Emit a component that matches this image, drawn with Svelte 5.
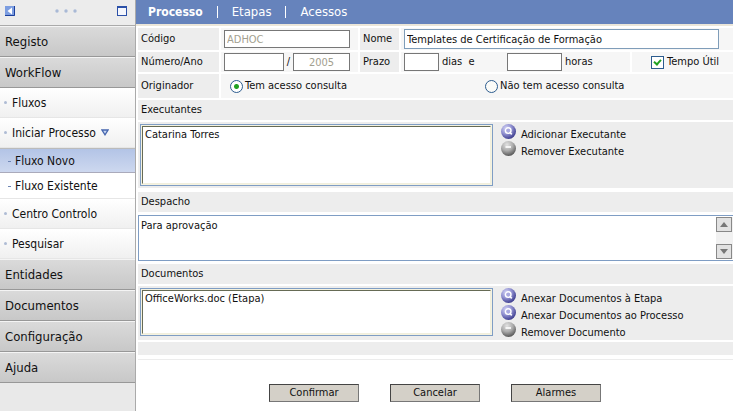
<script>
  const before = ['Registo', 'WorkFlow'];
  const after = ['Entidades', 'Documentos', 'Configuração', 'Ajuda'];
  let code = $state('ADHOC');
  let name = $state('Templates de Certificação de Formação');
  let year = $state('2005');
  let dispatch = $state('Para aprovação');
  let access = $state('com');
  let useful = $state(true);
</script>

{#snippet search()}
  <svg width="16" height="16" viewBox="0 0 16 16" aria-hidden="true">
    <defs>
      <radialGradient id="blueBall" cx="0.35" cy="0.3" r="0.75">
        <stop offset="0" stop-color="#d4d4f6" />
        <stop offset="0.5" stop-color="#9090d0" />
        <stop offset="1" stop-color="#38388a" />
      </radialGradient>
    </defs>
    <circle cx="7.5" cy="7.5" r="7.5" fill="url(#blueBall)" />
    <circle cx="7.2" cy="6.6" r="2.8" fill="#a9a9e0" stroke="#fff" stroke-width="1.4" />
    <path d="M9.2 8.7l1.6 1.7" stroke="#fff" stroke-width="1.6" />
  </svg>
{/snippet}

{#snippet minus()}
  <svg width="16" height="16" viewBox="0 0 16 16" aria-hidden="true">
    <defs>
      <radialGradient id="greyBall" cx="0.4" cy="0.25" r="0.8">
        <stop offset="0" stop-color="#e2e2e2" />
        <stop offset="0.5" stop-color="#ababab" />
        <stop offset="1" stop-color="#4c4c4c" />
      </radialGradient>
    </defs>
    <circle cx="7.5" cy="7.5" r="7.5" fill="url(#greyBall)" />
    <path d="M4.5 6h5.5" stroke="#fff" stroke-width="1.6" />
  </svg>
{/snippet}

<div class="app">
  <nav class="side">
    <div class="tools">
      <button class="plain" aria-label="Recolher">
        <svg width="10" height="10" viewBox="0 0 10 10"><rect width="10" height="10" fill="#7c9de0" /><path d="M0 9.5h9.5V0" fill="none" stroke="#1b3f9c" /><path d="M7 1.5v7L2.5 5z" fill="#fff" /></svg>
      </button>
      <svg width="22" height="4" viewBox="0 0 22 4" fill="#a9b9d6" aria-hidden="true"><circle cx="2" cy="2" r="1.7" /><circle cx="11" cy="2" r="1.7" /><circle cx="20" cy="2" r="1.7" /></svg>
      <button class="plain" aria-label="Janela">
        <svg width="10" height="10" viewBox="0 0 10 10"><rect x="0.5" y="0.5" width="9" height="9" fill="#f4f6fc" stroke="#2b50a8" /><path d="M0 1h10" stroke="#2b50a8" stroke-width="2" /></svg>
      </button>
    </div>
    {#each before as item}<a class="head" href="#top">{item}</a>{/each}
    <a class="item" href="#top"><i></i>Fluxos</a>
    <a class="item" href="#top"><i></i>Iniciar Processo
      <svg class="down" width="8" height="7" viewBox="0 0 8 7" aria-hidden="true"><path d="M1 1h6L4 5.8z" fill="#c9d8f2" stroke="#4666ae" stroke-width="1.3" /></svg>
    </a>
    <a class="sub current" href="#top"><b></b>Fluxo Novo</a>
    <a class="sub" href="#top"><b></b>Fluxo Existente</a>
    <a class="item" href="#top"><i></i>Centro Controlo</a>
    <a class="item" href="#top"><i></i>Pesquisar</a>
    {#each after as item}<a class="head" href="#top">{item}</a>{/each}
  </nav>

  <main>
    <div class="tabs">
      <a class="on" href="#top">Processo</a><a href="#top">Etapas</a><a href="#top">Acessos</a>
    </div>
    <form onsubmit={(e) => e.preventDefault()}>
      <div class="row">
        <label class="cap" for="code">Código</label>
        <div class="cell"><input id="code" class="grow" bind:value={code} disabled /></div>
        <label class="cap" for="name">Nome</label>
        <div class="cell wide"><input id="name" class="grow blue" bind:value={name} /></div>
      </div>
      <div class="row short">
        <label class="cap" for="number">Número/Ano</label>
        <div class="cell"><input id="number" class="num" /><span class="slash">/</span><input class="grow mid" aria-label="Ano" bind:value={year} disabled /></div>
        <label class="cap" for="days">Prazo</label>
        <div class="split">
          <div class="cell"><input id="days" class="days" /><label class="unit first" for="days">dias&nbsp; e</label><input id="hours" class="hours" /><label class="unit" for="hours">horas</label></div>
          <div class="cell end"><input type="checkbox" id="useful" bind:checked={useful} /><label for="useful">Tempo Útil</label></div>
        </div>
      </div>
      <div class="row two">
        <span class="cap">Originador</span>
        <div class="cell radios">
          <label><input type="radio" value="com" bind:group={access} />Tem acesso consulta</label>
          <label><input type="radio" value="sem" bind:group={access} />Não tem acesso consulta</label>
        </div>
      </div>

      <label class="title" for="people">Executantes</label>
      <div class="panel people">
        <div class="box tall"><select id="people" size="4"><option>Catarina Torres</option></select></div>
        <div class="acts">
          <button class="plain">{@render search()}<span>Adicionar Executante</span></button>
          <button class="plain">{@render minus()}<span>Remover Executante</span></button>
        </div>
      </div>

      <label class="title" for="dispatch">Despacho</label>
      <div class="note">
        <textarea id="dispatch" bind:value={dispatch}></textarea>
        <div class="bar">
          <button aria-label="Subir"><svg width="8" height="5" viewBox="0 0 8 5"><path d="M0 5L4 0l4 5z" fill="#777" /></svg></button>
          <button aria-label="Descer"><svg width="8" height="5" viewBox="0 0 8 5"><path d="M0 0h8L4 5z" fill="#777" /></svg></button>
        </div>
      </div>

      <label class="title" for="docs">Documentos</label>
      <div class="panel">
        <div class="box"><select id="docs" size="3"><option>OfficeWorks.doc (Etapa)</option></select></div>
        <div class="acts">
          <button class="plain">{@render search()}<span>Anexar Documentos à Etapa</span></button>
          <button class="plain">{@render search()}<span>Anexar Documentos ao Processo</span></button>
          <button class="plain">{@render minus()}<span>Remover Documento</span></button>
        </div>
      </div>
      <div class="strip"></div>
      <div class="foot">
        <button>Confirmar</button><button>Cancelar</button><button>Alarmes</button>
      </div>
    </form>
  </main>
</div>

<style>
  .app, .app * { box-sizing: border-box; }
  .app {
    display: flex;
    min-height: 100vh;
    background: #fff;
    color: #111;
    font: 11px/14px Tahoma, "DejaVu Sans Condensed", "Noto Sans", sans-serif;
  }
  a { color: inherit; text-decoration: none; }
  input, select, textarea, button { font: inherit; color: inherit; margin: 0; border-radius: 0; }
  .plain { display: flex; border: 0; padding: 0; background: none; }
  svg { display: block; flex: none; }

  .side { width: 136px; flex: none; background: #e9e9e9; border-right: 1px solid #aaa; font-size: 12px; line-height: 16px; }
  .tools { display: flex; align-items: center; justify-content: space-between; height: 26px; padding: 0 8px 4px 5px; border-bottom: 1px solid #aaa; background: #ececec; }
  .head, .item, .sub { display: flex; align-items: center; }
  .head { height: 31px; padding-left: 5px; border-top: 1px solid #f4f4f4; border-bottom: 1px solid #989898; background: linear-gradient(#dadada, #c8c8c8); font-size: 13px; }
  .item { height: 30px; background: linear-gradient(#fff, #f0f0f0); border-bottom: 1px solid #e6e6e6; }
  .item i { width: 3px; height: 3px; border-radius: 2px; background: #aebbd4; margin: 0 5px 0 4px; }
  .down { margin-left: 5px; }
  .sub { height: 26px; background: #fff; border-bottom: 1px solid #e6e6e6; }
  .sub b { width: 3px; height: 1px; background: #6f86b4; margin: 2px 4px 0 8px; }
  .current { height: 25px; background: linear-gradient(#b3c4e6, #cdd8ef); border-top: 1px solid #bbb; border-bottom-color: #aab; }

  main { flex: 1; min-width: 0; }
  .tabs { display: flex; align-items: center; height: 26px; background: #6683bc; color: #fff; border-bottom: 2px solid #ebe6d9; font-size: 13px; line-height: 16px; }
  .tabs a { padding: 0 14px; }
  .tabs a + a { border-left: 1px solid #fff; line-height: 12px; }
  .tabs .on { font-weight: bold; font-size: 12px; padding-left: 12px; }

  form { display: flex; flex-direction: column; gap: 2px; padding: 2px 0 0 2px; }
  .row { display: grid; grid-template-columns: 81px 137px 39px 1fr; column-gap: 2px; height: 22px; }
  .short { height: 20px; }
  .two { grid-template-columns: 81px 1fr; height: 24px; }
  .cap { display: flex; align-items: center; padding-left: 3px; background: #ededed; }
  .cell { display: flex; align-items: center; padding: 0 8px 0 3px; background: #f6f6f6; min-width: 0; }
  .wide { padding-right: 14px; }
  .row input:not([type]) { height: 18px; min-width: 0; border: 1px solid #777; background: #fff; padding: 0 2px; }
  .row .grow { flex: 1; }
  .row .blue:not([type]) { height: 20px; border-color: #7f9db9; }
  .row input:disabled { color: #a3a08f; }
  .num { width: 60px; }
  .slash { width: 9px; text-align: center; }
  .mid { text-align: center; }
  .days { width: 35px; }
  .hours { width: 55px; }
  .unit { padding-left: 3px; }
  .first { width: 68px; }
  .split { display: grid; grid-template-columns: 229px 1fr; gap: 2px; }
  .end { padding-left: 19px; }
  input[type='checkbox'], input[type='radio'] { appearance: none; width: 13px; height: 13px; flex: none; border: 1px solid #2c5c8f; background: #fbfbf8; }
  input[type='checkbox'] { margin-right: 3px; }
  input[type='checkbox']:checked { background: #fff; }
  input[type='checkbox']:checked::before { content: ''; display: block; width: 3px; height: 5px; margin: 1px 0 0 3px; border: solid #21a121; border-width: 0 2px 2px 0; transform: rotate(42deg); box-sizing: content-box; }
  input[type='radio'] { border-radius: 50%; margin-right: 2px; }
  input[type='radio']:checked { background: radial-gradient(circle, #21a121 0 2px, #fff 3px); }
  .radios { padding-left: 9px; }
  .radios label { display: flex; align-items: center; flex: none; width: 255px; }

  .title { height: 20px; padding: 3px; background: #ededed; }
  .panel { display: flex; gap: 8px; padding: 2px; background: #ededed; }
  .people { margin-bottom: 2px; }
  .box { width: 353px; height: 48px; flex: none; padding: 1px; border: 1px solid #7f9dc4; background: #f4f2e0; }
  .tall { height: 62px; }
  select { display: block; width: 100%; height: 100%; border: 1px solid #f1efdd; border-top-color: #666b55; border-left-color: #666b55; background: #fff; padding: 0; overflow: hidden; outline: none; }
  option { padding: 1px 2px 0; min-height: 14px; }
  .acts { display: flex; flex-direction: column; gap: 1px; }
  .acts button { height: 16px; gap: 4px; }
  .acts span { padding-top: 4px; }
  .note { position: relative; height: 46px; margin: 1px 0; border: 1px solid #7f9dc4; border-right: 0; background: #fff; }
  textarea { display: block; width: 100%; height: 100%; border: 0; padding: 3px 2px; resize: none; overflow: hidden; background: none; }
  .bar { position: absolute; inset: 1px 0 1px auto; width: 17px; display: flex; flex-direction: column; justify-content: space-between; background: #f1f1f1; }
  .bar button { display: grid; place-items: center; width: 16px; height: 15px; padding: 0; border: 1px solid #888; background: #e2e2e2; }
  .strip { height: 13px; background: #ededed; }
  .foot { display: flex; gap: 31px; padding: 24px 0 8px 131px; margin-top: 2px; border-top: 1px solid #ececec; }
  .foot button { width: 90px; height: 18px; padding: 0; border: 1px solid #777; border-top-color: #444; border-left-color: #444; background: #d4d0c8; }
</style>
